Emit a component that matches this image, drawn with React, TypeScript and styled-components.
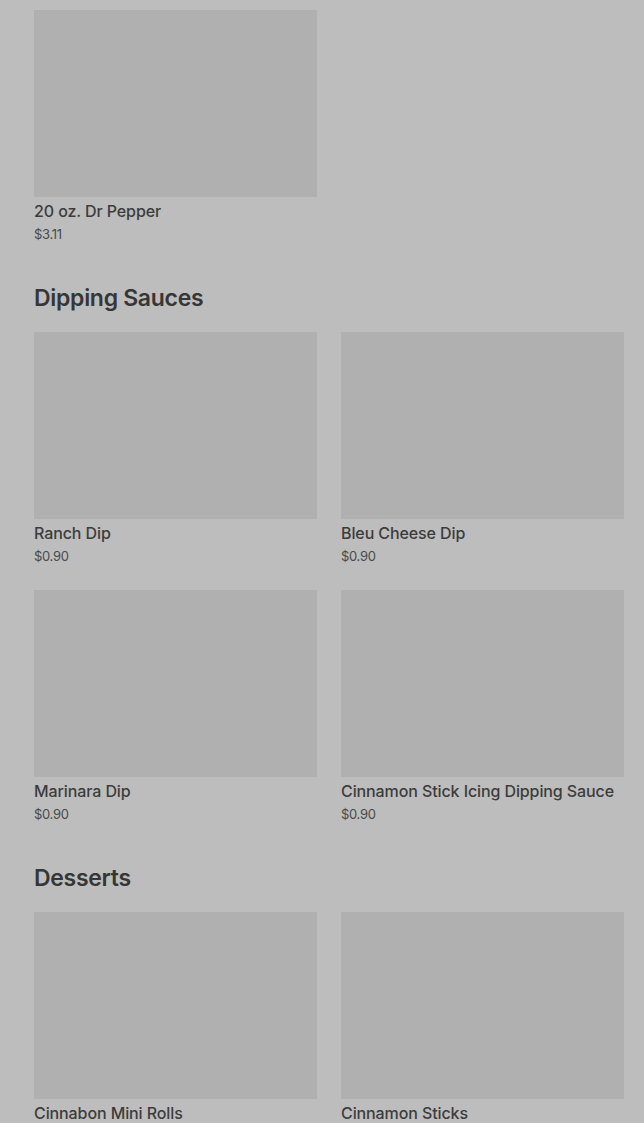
import React from 'react';
import styled, { createGlobalStyle } from 'styled-components';

const GlobalStyle = createGlobalStyle`
  body {
    margin: 0;
    background: #bdbdbd;
    font-family: Inter, "Noto Sans", Arial, sans-serif;
    overflow: hidden;
  }
`

const Page = styled.div`
  width: 644px;
  height: 1123px;
  box-sizing: border-box;
  padding: 10px 20px 0 34px;
  background: #bdbdbd;
  overflow: hidden;
`

const Section = styled.section`
  margin-bottom: 39px;
`

const SectionTitle = styled.h2`
  margin: 0 0 17px 0;
  font-size: 23px;
  line-height: 33px;
  font-weight: 600;
  letter-spacing: -0.3px;
  color: #363636;
`

const Grid = styled.div`
  display: grid;
  grid-template-columns: 283px 283px;
  column-gap: 24px;
  row-gap: 25px;
`

const Card = styled.div`
  display: flex;
  flex-direction: column;
`

const Thumb = styled.div`
  height: 187px;
  background: #b0b0b0;
`

const ItemName = styled.div`
  margin-top: 4px;
  font-size: 16px;
  line-height: 20px;
  font-weight: 500;
  letter-spacing: -0.1px;
  color: #3c3c3c;
  white-space: nowrap;
`

const Price = styled.div`
  margin-top: 4px;
  font-size: 13px;
  line-height: 18px;
  letter-spacing: -0.3px;
  color: #4a4a4a;
`

type Item = { name: string; price?: string }

const sections: { title?: string; items: Item[] }[] = [
  { items: [{ name: '20 oz. Dr Pepper', price: '$3.11' }] },
  {
    title: 'Dipping Sauces',
    items: [
      { name: 'Ranch Dip', price: '$0.90' },
      { name: 'Bleu Cheese Dip', price: '$0.90' },
      { name: 'Marinara Dip', price: '$0.90' },
      { name: 'Cinnamon Stick Icing Dipping Sauce', price: '$0.90' },
    ],
  },
  {
    title: 'Desserts',
    items: [
      { name: 'Cinnabon Mini Rolls', price: '$6.49' },
      { name: 'Cinnamon Sticks', price: '$5.99' },
    ],
  },
]

export default function App() {
  return (
    <>
      <GlobalStyle />
      <Page>
        {sections.map((s, i) => (
          <Section key={i}>
            {s.title && <SectionTitle>{s.title}</SectionTitle>}
            <Grid>
              {s.items.map((it) => (
                <Card key={it.name}>
                  <Thumb />
                  <ItemName>{it.name}</ItemName>
                  {it.price && <Price>{it.price}</Price>}
                </Card>
              ))}
            </Grid>
          </Section>
        ))}
      </Page>
    </>
  )
}
